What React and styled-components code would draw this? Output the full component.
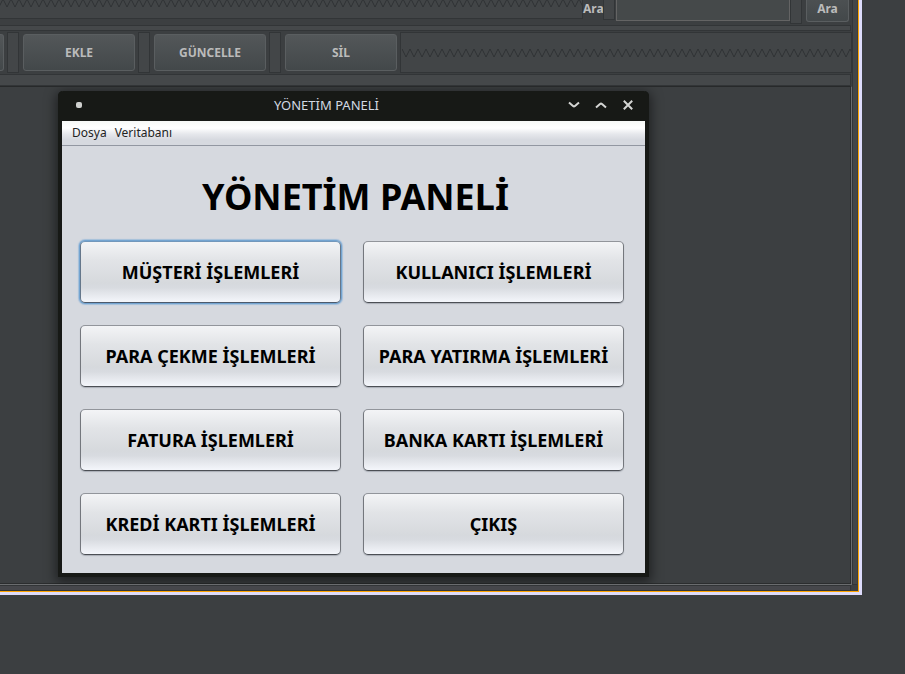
import React from "react";
import styled, { createGlobalStyle } from "styled-components";

const GlobalStyle = createGlobalStyle`
  * { box-sizing: border-box; }
  body {
    margin: 0;
    background: #3c3f41;
    font-family: "Noto Sans", sans-serif;
    font-size: 12px;
    color: #bbbbbb;
    overflow-x: hidden;
  }
  button, input { font: inherit; color: inherit; margin: 0; padding: 0; }
`;

const line = "#323537";

const DesignFrame = styled.main`
  display: grid;
  grid-template-columns: minmax(0, 1fr) 6px;
  margin-right: 43px;
  border: solid #dedcfb;
  border-width: 0 3px 3px 0;
  box-shadow: inset -1px -1px 0 #ffa500;
  padding: 0 1px 1px 0;
`;

const EdgeStrip = styled.div`
  margin-right: 1px;
  background: #434648;
  border-left: 1px solid ${line};
  border-bottom: 1px solid ${line};
`;

const BottomStrip = styled.div`
  height: 6px;
  margin-right: 1px;
  background: #46474b;
  border: solid ${line};
  border-width: 1px 1px 1px 0;
`;

const SearchRow = styled.form`
  display: flex;
  align-items: flex-start;
  height: 25px;
`;

const Spring = styled.div`
  flex: 1;
  min-width: 0;
  display: flex;
  align-items: ${(p) => (p.$cut ? "flex-start" : "center")};
  align-self: ${(p) => (p.$cut ? "flex-start" : "stretch")};
  height: ${(p) => (p.$cut ? "19px" : "auto")};
  background: #424547;
  border: 1px solid ${line};
  ${(p) => (p.$cut ? "border-top: 0; border-left: 0;" : "padding-left: 1px;")}
`;

const Wave = styled.svg`
  display: block;
  width: 100%;
  height: ${(p) => (p.$cut ? "8px" : "10px")};
`;

const Spacer = styled.div`
  width: 12px;
  height: ${(p) => p.$height}px;
  background: #434648;
  border: 1px solid ${line};
  border-top-width: ${(p) => (p.$cut ? "0" : "1px")};
`;

const SearchLabel = styled.label`
  width: 20px;
  font-weight: 700;
  line-height: 18px;
`;

const SearchInput = styled.input`
  width: 174px;
  height: 21px;
  margin-left: 1px;
  background: #45494a;
  border: 1px solid #646464;
  border-top: 0;
  border-radius: 0;
  outline: none;
`;

const DarkButton = styled.button`
  width: 112px;
  height: 37px;
  border: 1px solid #5a5e60;
  border-radius: 3px;
  background: linear-gradient(#535759, #43484a);
  font-weight: 700;
  line-height: 34px;
`;

const SearchButton = styled(DarkButton)`
  width: 43px;
  height: 22px;
  margin: 0 3px 0 4px;
  border-top: 0;
  border-radius: 0 0 3px 3px;
  background: linear-gradient(#4c5052, #43484a);
  line-height: 18px;
  padding-bottom: 3px;
`;

const Strip = styled.div`
  height: ${(p) => p.$height}px;
  margin-right: 1px;
  background: #45484a;
  border: solid ${line};
  border-width: 1px 1px 1px 0;
`;

const Toolbar = styled.div`
  display: flex;
  align-items: center;
  height: 41px;
  margin: 1px 0;
`;

const ToolSlot = styled.div`
  display: flex;
  align-items: center;
  padding: 0 3px 0 4px;
`;

const LeadingButton = styled(DarkButton)`
  width: 4px;
  border-left: 0;
  border-radius: 0 3px 3px 0;
  margin-right: 3px;
`;

const Workspace = styled.section`
  padding: 4px 0 7px 58px;
  border: solid #6a6c6e;
  border-width: 1px 1px 1px 0;
  border-top-color: #27292a;
  box-shadow: inset -1px -1px 0 #2b2d2e;
  overflow: hidden;
`;

const Dialog = styled.section`
  max-width: 591px;
  border: solid #171916;
  border-width: 0 4px 4px;
  border-radius: 5px 5px 0 0;
  background: #d6d9df;
  box-shadow: 0 3px 12px 2px rgba(0, 0, 0, 0.5);
  color: #000;
`;

const TitleBar = styled.header`
  display: grid;
  grid-template-columns: 81px 1fr 81px;
  align-items: center;
  height: 30px;
  margin: 0 -4px;
  padding: 0 8px 2px 7px;
  border-radius: 5px 5px 0 0;
  background: #171916;
  color: #d3dae3;
`;

const WindowMenu = styled.button`
  width: 28px;
  height: 28px;
  border: 0;
  background: none;
  display: grid;
  place-items: center;
`;

const Dot = styled.span`
  width: 6px;
  height: 6px;
  border-radius: 2px;
  background: #cfd0ce;
`;

const WindowTitle = styled.div`
  font-size: 13px;
  line-height: 18px;
  text-align: center;
  padding-right: 53px;
`;

const WindowControls = styled.div`
  display: flex;
`;

const ControlButton = styled.button`
  width: 27px;
  height: 28px;
  border: 0;
  background: none;
  display: grid;
  place-items: center;
`;

const MenuBar = styled.nav`
  display: flex;
  gap: 8px;
  height: 25px;
  padding: 0 10px;
  border-bottom: 1px solid #9297a1;
  background: linear-gradient(#f6f8f6 0, #ffffff 7px, #e6e8ec 13px, #d6d9df 19px, #d6d9df 100%);
`;

const MenuItem = styled.button`
  border: 0;
  background: none;
  color: #232323;
  line-height: 22px;
`;

const PanelBody = styled.div`
  padding: 26px 21px 18px 18px;
`;

const Heading = styled.h1`
  margin: 0 0 20px;
  padding-left: 7px;
  font-size: 36px;
  line-height: 49px;
  font-weight: 700;
  text-align: center;
`;

const ActionGrid = styled.div`
  display: grid;
  grid-template-columns: 1fr 1fr;
  gap: 22px;
`;

const ActionButton = styled.button`
  height: 62px;
  border: 1px solid #7d8086;
  border-color: #92959b #74777d #4c4f55;
  border-radius: 5px;
  background: linear-gradient(#f3f4f6 0, #e2e4e7 30%, #d6d9dd 68%, #d8dbe0 76%, #f4f6fb 100%);
  box-shadow: 0 1px 1px rgba(90, 95, 105, 0.35);
  font-size: 18px;
  line-height: 25px;
  font-weight: 700;
  white-space: nowrap;
  outline: none;

  &:focus {
    border-color: #7297bb #65778b #4c5a6c;
    box-shadow: 0 0 0 1px #73a4d1, 0 0 1px 2px #a4bfda;
  }
`;

const actions = [
  "MÜŞTERİ İŞLEMLERİ",
  "KULLANICI İŞLEMLERİ",
  "PARA ÇEKME İŞLEMLERİ",
  "PARA YATIRMA İŞLEMLERİ",
  "FATURA İŞLEMLERİ",
  "BANKA KARTI İŞLEMLERİ",
  "KREDİ KARTI İŞLEMLERİ",
  "ÇIKIŞ",
];

const tools = ["EKLE", "GÜNCELLE", "SİL"];

function ZigZag({ id, cut }) {
  return (
    <Wave $cut={cut} aria-hidden="true">
      <defs>
        <pattern id={id} width="8" height="10" patternUnits="userSpaceOnUse" x={cut ? 3 : 0} y={cut ? -2 : 0}>
          <path d="M-4 9 L0 1 L4 9 L8 1 L12 9" fill="none" stroke="#2e3133" strokeWidth="1" />
        </pattern>
      </defs>
      <rect width="100%" height="100%" fill={`url(#${id})`} />
    </Wave>
  );
}

function ControlIcon({ d }) {
  return (
    <svg width="14" height="14" viewBox="0 0 14 14" fill="none" stroke="#d4d5d3" strokeWidth="2" aria-hidden="true">
      <path d={d} />
    </svg>
  );
}

export default function App() {
  return (
    <>
      <GlobalStyle />
      <DesignFrame>
        <div>
          <SearchRow onSubmit={(e) => e.preventDefault()}>
            <Spring $cut>
              <ZigZag id="wave-search" cut />
            </Spring>
            <SearchLabel htmlFor="search">Ara</SearchLabel>
            <Spacer $height={20} $cut />
            <SearchInput id="search" type="text" />
            <Spacer $height={24} $cut />
            <SearchButton type="submit">Ara</SearchButton>
          </SearchRow>
          <Strip $height={6} />
          <Toolbar>
            <LeadingButton type="button" aria-label="Önceki" />
            <Spacer $height={41} />
            {tools.map((name, i) => (
              <React.Fragment key={name}>
                {i > 0 && <Spacer $height={41} />}
                <ToolSlot>
                  <DarkButton type="button">{name}</DarkButton>
                </ToolSlot>
              </React.Fragment>
            ))}
            <Spring>
              <ZigZag id="wave-tools" />
            </Spring>
          </Toolbar>
          <Strip $height={12} />
          <Workspace>
            <Dialog aria-label="YÖNETİM PANELİ">
              <TitleBar>
                <WindowMenu type="button" aria-label="Pencere">
                  <Dot />
                </WindowMenu>
                <WindowTitle>YÖNETİM PANELİ</WindowTitle>
                <WindowControls>
                  <ControlButton type="button" aria-label="Küçült">
                    <ControlIcon d="M2 4.5 L6 8 Q7 8.8 8 8 L12 4.5" />
                  </ControlButton>
                  <ControlButton type="button" aria-label="Büyüt">
                    <ControlIcon d="M2 9.5 L6 6 Q7 5.2 8 6 L12 9.5" />
                  </ControlButton>
                  <ControlButton type="button" aria-label="Kapat">
                    <ControlIcon d="M2.8 2.8 L11.2 11.2 M11.2 2.8 L2.8 11.2" />
                  </ControlButton>
                </WindowControls>
              </TitleBar>
              <MenuBar>
                <MenuItem type="button">Dosya</MenuItem>
                <MenuItem type="button">Veritabanı</MenuItem>
              </MenuBar>
              <PanelBody>
                <Heading>YÖNETİM PANELİ</Heading>
                <ActionGrid>
                  {actions.map((name, i) => (
                    <ActionButton key={name} type="button" autoFocus={i === 0}>
                      {name}
                    </ActionButton>
                  ))}
                </ActionGrid>
              </PanelBody>
            </Dialog>
          </Workspace>
        </div>
        <EdgeStrip />
        <BottomStrip />
      </DesignFrame>
    </>
  );
}
